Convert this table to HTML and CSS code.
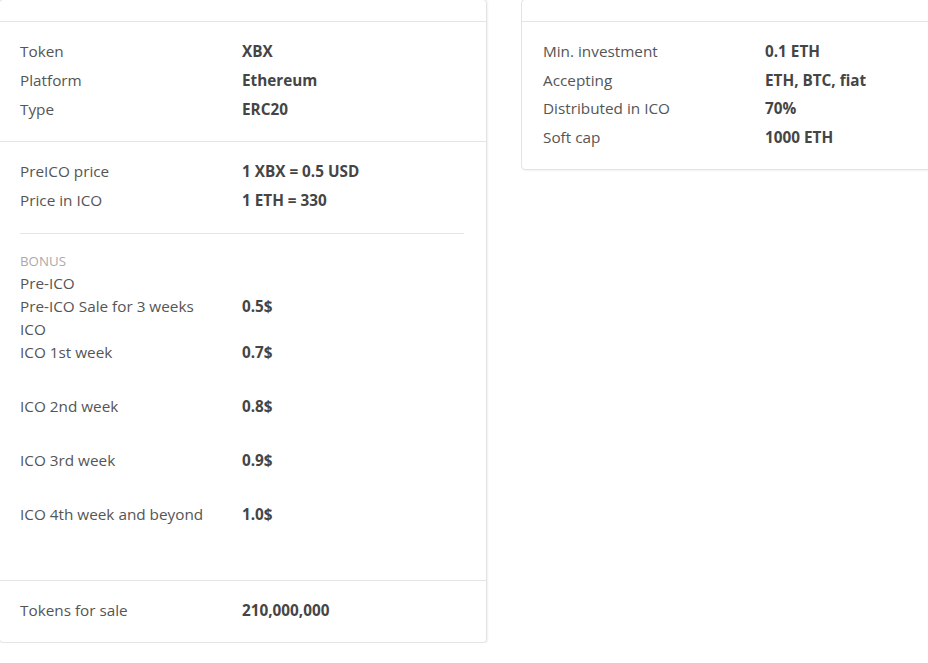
FILE: index.html
```html
<!DOCTYPE html>
<html lang="en">
<head>
    <meta charset="UTF-8">
    <meta name="viewport" content="width=device-width, initial-scale=1.0">
    <title>Token Sale Details</title>
    <link rel="stylesheet" href="styles.css">
</head>
<body>
    <div class="ico-details">
        <div class="card">
            <div class="card-head"></div>
            <div class="card-section">
                <div class="row"><span class="label">Token</span><span class="value">XBX</span></div>
                <div class="row"><span class="label">Platform</span><span class="value">Ethereum</span></div>
                <div class="row"><span class="label">Type</span><span class="value">ERC20</span></div>
            </div>
            <div class="card-section">
                <div class="row"><span class="label">PreICO price</span><span class="value">1 XBX = 0.5 USD</span></div>
                <div class="row"><span class="label">Price in ICO</span><span class="value">1 ETH = 330</span></div>
                <hr class="divider">
                <div class="bonus">
                    <div class="bonus-title">BONUS</div>
                    <div class="bonus-row"><span class="label">Pre-ICO</span><span class="value"></span></div>
                    <div class="bonus-row"><span class="label">Pre-ICO Sale for 3 weeks</span><span class="value">0.5$</span></div>
                    <div class="bonus-row"><span class="label">ICO</span><span class="value"></span></div>
                    <div class="bonus-row tall"><span class="label">ICO 1st week</span><span class="value">0.7$</span></div>
                    <div class="bonus-row tall"><span class="label">ICO 2nd week</span><span class="value">0.8$</span></div>
                    <div class="bonus-row tall"><span class="label">ICO 3rd week</span><span class="value">0.9$</span></div>
                    <div class="bonus-row tall"><span class="label">ICO 4th week and beyond</span><span class="value">1.0$</span></div>
                </div>
            </div>
            <div class="card-section">
                <div class="row"><span class="label">Tokens for sale</span><span class="value">210,000,000</span></div>
            </div>
        </div>

        <div class="card card-side">
            <div class="card-head"></div>
            <div class="card-section">
                <div class="row"><span class="label">Min. investment</span><span class="value">0.1 ETH</span></div>
                <div class="row"><span class="label">Accepting</span><span class="value">ETH, BTC, fiat</span></div>
                <div class="row"><span class="label">Distributed in ICO</span><span class="value">70%</span></div>
                <div class="row"><span class="label">Soft cap</span><span class="value">1000 ETH</span></div>
            </div>
        </div>
    </div>
</body>
</html>
```

FILE: styles.css
```css
body {
    font-family: 'Open Sans', sans-serif;
    font-size: 15.3px;
    background-color: #ffffff;
    color: #555555;
    margin: 0;
    overflow: hidden;
}

.ico-details {
    display: flex;
    align-items: flex-start;
    gap: 34px;
    margin: -1px 0 0 -1px;
}

.card {
    flex: 0 0 488px;
    box-sizing: border-box;
    background-color: #fff;
    border: 1px solid #e4e4e4;
    border-radius: 4px;
    box-shadow: 1px 1px 2px rgba(0, 0, 0, 0.06);
}

.card-head {
    height: 21px;
    border-bottom: 1px solid #e4e4e4;
}

.card-section {
    padding: 15px 22px 17px 20px;
    border-bottom: 1px solid #e4e4e4;
}

.card-side .card-section {
    padding-left: 21px;
    padding-right: 21px;
}

.card-section:last-child {
    border-bottom: none;
}

.row,
.bonus-row {
    display: grid;
    grid-template-columns: 1fr 1fr;
    line-height: 29px;
}

.card-side .row {
    line-height: 28.7px;
}

.bonus-row {
    line-height: 23px;
}

.bonus-row.tall {
    padding-bottom: 31px;
}

.label {
    color: #555;
}

.value {
    color: #454545;
    font-weight: 700;
}

.divider {
    border: none;
    border-top: 1px solid #e6e6e6;
    margin: 18px 0 16px;
}

.bonus {
    padding-bottom: 6px;
}

.bonus-title {
    font-size: 13.3px;
    line-height: 22px;
    color: #aaa;
}
```
